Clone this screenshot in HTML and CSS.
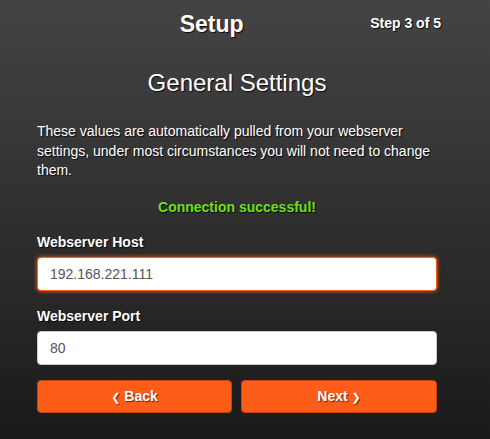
FILE: index.html
```html
<!DOCTYPE html>
<html>
<head>
    <title>Setup</title>
    <link rel="stylesheet" href="styles.css">
</head>
<body>
    <div class="page">
        <header class="top">
            <h1>Setup</h1>
            <span class="step">Step 3 of 5</span>
        </header>

        <h2>General Settings</h2>
        <p class="intro">These values are automatically pulled from your webserver settings, under most circumstances you will not need to change them.</p>

        <p class="status">Connection successful!</p>

        <form class="settings">
            <label for="host">Webserver Host</label>
            <input type="text" id="host" class="field active" value="192.168.221.111">

            <label for="port">Webserver Port</label>
            <input type="text" id="port" class="field" value="80">

            <div class="buttons">
                <button type="button" class="btn"><span class="chev">&#10094;</span> Back</button>
                <button type="button" class="btn">Next <span class="chev">&#10095;</span></button>
            </div>
        </form>
    </div>
</body>
</html>
```

FILE: styles.css
```css
html, body {
    height: 100%;
}
body {
    margin: 0;
    color: white;
    font-family: "Liberation Sans", Arial, sans-serif;
    background: linear-gradient(to bottom, #444444, #1a1a1a);
    text-shadow: 1px 1px 1px rgba(0, 0, 0, 0.8);
    overflow: hidden;
}
.page {
    width: 400px;
    margin-left: 37px;
    padding-top: 10px;
}
.top {
    display: flex;
    align-items: flex-start;
    width: 404px;
}
.top h1 {
    flex: 1;
    margin: 0;
    padding-left: 16px;
    text-align: center;
    font-size: 23px;
    line-height: 28px;
}
.step {
    font-size: 14px;
    font-weight: bold;
    line-height: 20px;
    margin-top: 3px;
}
h2 {
    margin: 31px 0 0;
    text-align: center;
    font-size: 24px;
    font-weight: normal;
    line-height: 28px;
}
.intro {
    margin: 25px 0 0;
    font-size: 14px;
    line-height: 19.6px;
}
.status {
    margin: 16px 0 0;
    text-align: center;
    color: #6be01a;
    font-weight: bold;
    font-size: 14px;
    line-height: 20px;
}
.settings label {
    display: block;
    margin-top: 15px;
    font-size: 14px;
    font-weight: bold;
    line-height: 20px;
}
.field {
    display: block;
    box-sizing: border-box;
    width: 400px;
    height: 34px;
    margin-top: 5px;
    padding: 6px 12px;
    border: 1px solid #cccccc;
    border-radius: 4px;
    background: white;
    color: #555;
    font-family: "Liberation Sans", Arial, sans-serif;
    font-size: 14px;
    text-shadow: none;
    outline: none;
}
.field.active {
    border-color: #ff5a14;
    box-shadow: 0 0 4px #ff5a14;
}
.buttons {
    display: flex;
    gap: 9px;
    margin-top: 15px;
}
.btn {
    flex: 1;
    height: 33px;
    padding: 0;
    border: 1px solid #c94310;
    border-radius: 4px;
    background-color: #fd5d19;
    color: white;
    font-family: "Liberation Sans", Arial, sans-serif;
    font-size: 14px;
    font-weight: bold;
    text-shadow: 1px 1px 1px rgba(0, 0, 0, 0.6);
    cursor: pointer;
}
.btn:first-child {
    flex: 0 0 195px;
}
.chev {
    font-family: "DejaVu Sans", sans-serif;
    font-size: 11px;
    font-weight: bold;
}
```
